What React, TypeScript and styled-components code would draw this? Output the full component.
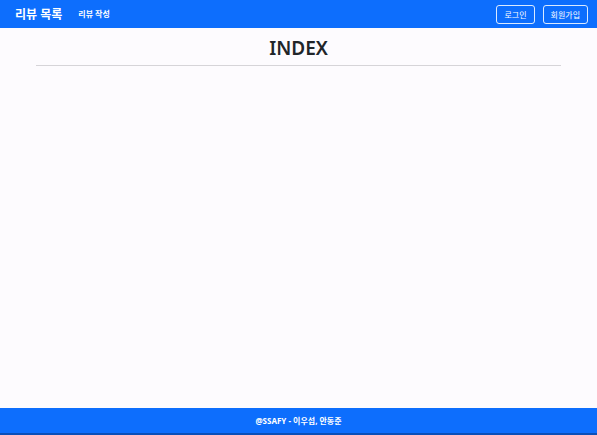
import * as React from "react";
import styled, { createGlobalStyle } from "styled-components";

const Global = createGlobalStyle`
    body {
        margin: 0;
        background-color: #fdfbfe;
        font-family: "Noto Sans", "Noto Sans CJK KR", sans-serif;
    }
`;

const Page = styled.div`
    display: flex;
    flex-direction: column;
    min-height: 100vh;
`;

const NavBar = styled.nav`
    display: flex;
    align-items: center;
    justify-content: space-between;
    height: 28px;
    padding: 0 9px 0 15px;
    background-color: #0d6efd;
`;

const NavLeft = styled.div`
    display: flex;
    align-items: center;
    gap: 16px;
`;

const Brand = styled.span`
    color: white;
    font-size: 12px;
    font-weight: 700;
`;

const NavLink = styled.span`
    color: white;
    font-size: 8px;
    font-weight: 700;
    margin-top: -2px;
`;

const NavRight = styled.div`
    display: flex;
    gap: 8px;
`;

const OutlineButton = styled.button`
    height: 19px;
    padding: 0 7px;
    border: 1px solid rgba(255, 255, 255, 0.85);
    border-radius: 3px;
    background-color: transparent;
    color: white;
    font-family: "Noto Sans", "Noto Sans CJK KR", sans-serif;
    font-size: 8px;
`;

const Main = styled.main`
    flex: 1;
    padding: 0 36px;
`;

const Title = styled.h1`
    margin: 0;
    padding-top: 8px;
    text-align: center;
    font-size: 19px;
    font-weight: 600;
    color: #212529;
    line-height: 24px;
`;

const Divider = styled.hr`
    margin: 5px 0 0;
    border: 0;
    border-top: 1px solid #d6d4d8;
`;

const Footer = styled.footer`
    display: flex;
    align-items: center;
    justify-content: center;
    height: 25px;
    background-color: #0d6efd;
    border-bottom: 2px solid #0a4fb8;
    color: white;
    font-size: 8px;
    font-weight: 700;
`;

const App: React.FC = () => {
    return (
        <Page>
            <Global />
            <NavBar>
                <NavLeft>
                    <Brand>리뷰 목록</Brand>
                    <NavLink>리뷰 작성</NavLink>
                </NavLeft>
                <NavRight>
                    <OutlineButton>로그인</OutlineButton>
                    <OutlineButton>회원가입</OutlineButton>
                </NavRight>
            </NavBar>
            <Main>
                <Title>INDEX</Title>
                <Divider />
            </Main>
            <Footer>@SSAFY - 이우섭, 안동준</Footer>
        </Page>
    );
};

export default App;
